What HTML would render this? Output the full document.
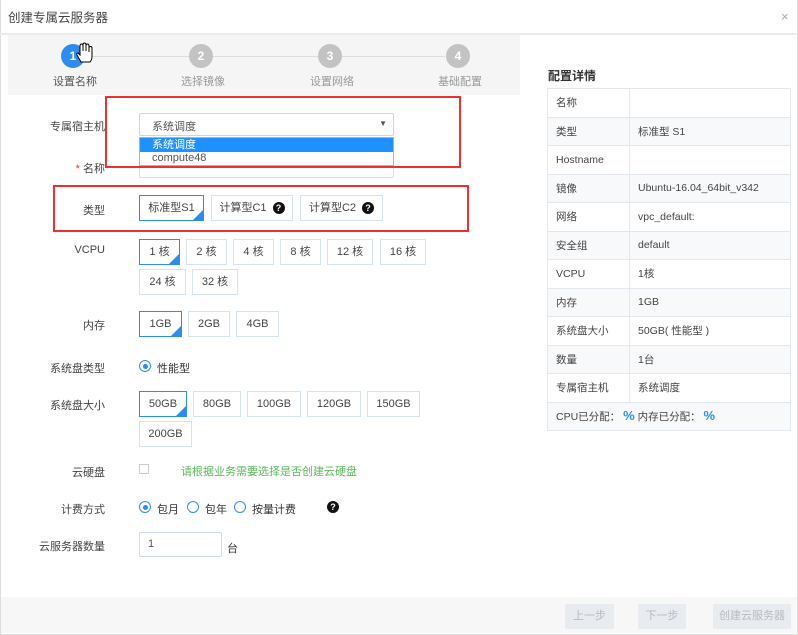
<!DOCTYPE html><html><head><meta charset="utf-8"><style>
*{margin:0;padding:0;box-sizing:border-box}
body{width:798px;height:635px;position:relative;background:#fff;font-family:"Liberation Sans","Noto Sans CJK SC",sans-serif;font-size:11px;color:#333;overflow:hidden}
.a{position:absolute}
.lb{position:absolute;width:100px;text-align:right;left:5px;font-size:11px;color:#444}
.b{position:absolute;border:1px solid #d5e2ef;height:26px;line-height:24px;text-align:center;font-size:11px;color:#444;background:#fff}
.b.s{border:1px solid #2d8cf0}
.b.s:after{content:"";position:absolute;right:0;bottom:0;border-style:solid;border-width:0 0 10px 10px;border-color:transparent transparent #2d8cf0 transparent}
.c{position:absolute;width:24px;height:24px;border-radius:50%;background:#c3c3c3;color:#fff;text-align:center;line-height:24px;font-weight:bold;font-size:12px}
.sl{position:absolute;font-size:11px;color:#999}
.q{display:inline-block;width:12px;height:12px;border-radius:50%;background:#111;color:#fff;font-size:9px;line-height:12px;text-align:center;font-weight:bold;vertical-align:middle;margin-left:6px}
.r{position:absolute;width:12px;height:12px;border-radius:50%;border:1px solid #2d8cf0;background:#fff}
.r.on:after{content:"";position:absolute;left:2.5px;top:2.5px;width:5px;height:5px;border-radius:50%;background:#2d8cf0}
table{border-collapse:collapse;position:absolute;left:547px;top:88px;width:244px}
td{border:1px solid #e3e8ee;height:28.5px;padding-left:8px;font-size:10.5px;color:#444}
tr:nth-child(even) td{background:#f8f9fb}
.btn{position:absolute;top:604px;height:25px;line-height:25px;text-align:center;background:#e8ebef;color:#b8bcc2;font-size:11px;border-radius:2px}
</style></head><body>
<div class="a" style="left:0;top:0;width:798px;height:635px;border:1px solid #ddd;border-top:none"></div>
<div class="a" style="left:8px;top:7px;font-size:12.5px;color:#444">创建专属云服务器</div>
<div class="a" style="left:781px;top:9px;color:#aaa;font-size:13px">×</div>
<div class="a" style="left:0;top:33px;width:798px;height:2px;background:#e8ecf0"></div>
<div class="a" style="left:8px;top:35px;width:512px;height:60px;background:#f5f5f5"></div>
<div class="a" style="left:85px;top:56px;width:360px;height:1px;background:#ddd"></div>
<div class="c" style="left:61px;top:44px;background:#2d8cf0">1</div>
<div class="c" style="left:189px;top:44px">2</div>
<div class="c" style="left:318px;top:44px">3</div>
<div class="c" style="left:446px;top:44px">4</div>
<svg class="a" style="left:75px;top:42px" width="20" height="22" viewBox="0 0 20 22"><path d="M6 20 L2 13 Q1 11 3 11 L5 13 L5 4 Q5 2 6.5 2 Q8 2 8 4 L8 9 L8 3 Q8 1 9.5 1 Q11 1 11 3 L11 9 L11 4 Q11 2 12.5 2 Q14 2 14 4 L14 10 L14 6 Q14 4.5 15.5 4.5 Q17 4.5 17 6 L17 14 Q17 18 15 20 Z" fill="#fff" stroke="#000" stroke-width="1"/></svg>
<div class="sl" style="left:53px;top:73px;color:#555">设置名称</div>
<div class="sl" style="left:181px;top:73px">选择镜像</div>
<div class="sl" style="left:310px;top:73px">设置网络</div>
<div class="sl" style="left:438px;top:73px">基础配置</div>

<div class="lb" style="top:118px">专属宿主机</div>
<div class="a" style="left:139px;top:113px;width:255px;height:23px;border:1px solid #ccd6e0;border-radius:2px;padding:4px 0 0 12px;color:#555">系统调度<span class="a" style="right:6px;top:5px;font-size:8px;color:#555">▼</span></div>
<div class="lb" style="top:160px"><span style="color:#e33">* </span>名称</div>
<div class="a" style="left:139px;top:150px;width:255px;height:28px;border:1px solid #d5e2ef;border-radius:2px"></div>
<div class="a" style="left:139px;top:137px;width:255px;height:29px;border:1px solid #9bb;background:#fff"><div style="background:#1e90ff;color:#fff;height:14px;line-height:14px;padding-left:12px">系统调度</div><div style="height:14px;line-height:13px;padding-left:12px;color:#555">compute48</div></div>
<div class="a" style="left:105px;top:96px;width:356px;height:72px;border:2px solid #f03030"></div>

<div class="lb" style="top:202px">类型</div>
<div class="b s" style="left:139px;top:195px;width:65px">标准型S1</div>
<div class="b" style="left:211px;top:195px;width:82px">计算型C1<span class="q">?</span></div>
<div class="b" style="left:300px;top:195px;width:83px">计算型C2<span class="q">?</span></div>
<div class="a" style="left:53px;top:185px;width:416px;height:47px;border:2px solid #f03030"></div>

<div class="lb" style="top:244px">VCPU</div>
<div class="b s" style="left:139px;top:239px;width:41px">1 核</div>
<div class="b" style="left:186px;top:239px;width:41px">2 核</div>
<div class="b" style="left:233px;top:239px;width:41px">4 核</div>
<div class="b" style="left:280px;top:239px;width:41px">8 核</div>
<div class="b" style="left:327px;top:239px;width:46px">12 核</div>
<div class="b" style="left:380px;top:239px;width:46px">16 核</div>
<div class="b" style="left:139px;top:269px;width:47px">24 核</div>
<div class="b" style="left:192px;top:269px;width:46px">32 核</div>

<div class="lb" style="top:317px">内存</div>
<div class="b s" style="left:139px;top:311px;width:43px">1GB</div>
<div class="b" style="left:188px;top:311px;width:42px">2GB</div>
<div class="b" style="left:236px;top:311px;width:43px">4GB</div>

<div class="lb" style="top:360px">系统盘类型</div>
<div class="r on" style="left:139px;top:360px"></div>
<div class="a" style="left:157px;top:360px">性能型</div>

<div class="lb" style="top:397px">系统盘大小</div>
<div class="b s" style="left:139px;top:391px;width:48px">50GB</div>
<div class="b" style="left:193px;top:391px;width:48px">80GB</div>
<div class="b" style="left:247px;top:391px;width:54px">100GB</div>
<div class="b" style="left:307px;top:391px;width:54px">120GB</div>
<div class="b" style="left:367px;top:391px;width:53px">150GB</div>
<div class="b" style="left:139px;top:421px;width:53px">200GB</div>

<div class="lb" style="top:464px">云硬盘</div>
<div class="a" style="left:139px;top:464px;width:10px;height:10px;border:1px solid #ccc"></div>
<div class="a" style="left:181px;top:463px;color:#5cb85c;font-size:11px">请根据业务需要选择是否创建云硬盘</div>

<div class="lb" style="top:501px">计费方式</div>
<div class="r on" style="left:139px;top:501px"></div><div class="a" style="left:157px;top:501px">包月</div>
<div class="r" style="left:187px;top:501px"></div><div class="a" style="left:205px;top:501px">包年</div>
<div class="r" style="left:234px;top:501px"></div><div class="a" style="left:252px;top:501px">按量计费</div>
<div class="a" style="left:327px;top:501px"><span class="q" style="margin:0">?</span></div>

<div class="lb" style="top:538px">云服务器数量</div>
<div class="a" style="left:139px;top:532px;width:83px;height:25px;border:1px solid #cfdbe8;border-radius:2px;padding:5px 0 0 8px;color:#555">1</div>
<div class="a" style="left:227px;top:540px">台</div>

<div class="a" style="left:548px;top:67px;font-size:12px;font-weight:bold;color:#333">配置详情</div>
<table>
<tr><td style="width:82px">名称</td><td></td></tr>
<tr><td>类型</td><td>标准型 S1</td></tr>
<tr><td>Hostname</td><td></td></tr>
<tr><td>镜像</td><td>Ubuntu-16.04_64bit_v342</td></tr>
<tr><td>网络</td><td>vpc_default:</td></tr>
<tr><td>安全组</td><td>default</td></tr>
<tr><td>VCPU</td><td>1核</td></tr>
<tr><td>内存</td><td>1GB</td></tr>
<tr><td>系统盘大小</td><td>50GB( 性能型 )</td></tr>
<tr><td>数量</td><td>1台</td></tr>
<tr><td>专属宿主机</td><td>系统调度</td></tr>
<tr><td colspan="2" style="background:#f8f9fb">CPU已分配： <b style="color:#2d8cf0;font-size:13px">%</b> 内存已分配： <b style="color:#2d8cf0;font-size:13px">%</b></td></tr>
</table>

<div class="a" style="left:1px;top:597px;width:796px;height:36px;background:#f7f7f7"></div>
<div class="btn" style="left:565px;width:49px">上一步</div>
<div class="btn" style="left:638px;width:48px">下一步</div>
<div class="btn" style="left:713px;width:78px">创建云服务器</div>
</body></html>
